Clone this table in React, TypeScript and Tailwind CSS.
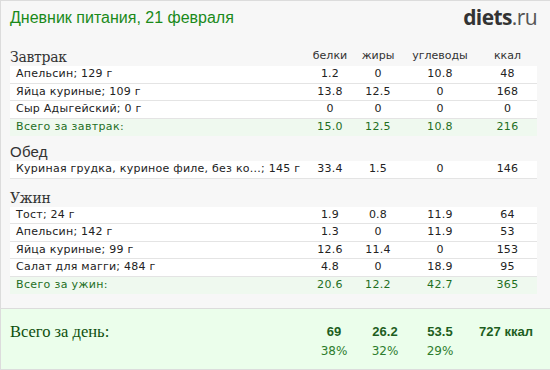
import React from "react";

type Row = { name: string; p: string; f: string; c: string; k: string };
type Section = { title: string; titleClass: string; gap: string; rows: Row[]; total?: Row };

const sections: Section[] = [
  {
    title: "Завтрак",
    titleClass: "font-['DejaVu_Serif',serif] text-[14px] tracking-[-0.3px]",
    gap: "mt-0",
    rows: [
      { name: "Апельсин; 129 г", p: "1.2", f: "0", c: "10.8", k: "48" },
      { name: "Яйца куриные; 109 г", p: "13.8", f: "12.5", c: "0", k: "168" },
      { name: "Сыр Адыгейский; 0 г", p: "0", f: "0", c: "0", k: "0" },
    ],
    total: { name: "Всего за завтрак:", p: "15.0", f: "12.5", c: "10.8", k: "216" },
  },
  {
    title: "Обед",
    titleClass: "font-['Liberation_Sans',sans-serif] text-[15px]",
    gap: "mt-[3px]",
    rows: [
      { name: "Куриная грудка, куриное филе, без ко...; 145 г", p: "33.4", f: "1.5", c: "0", k: "146" },
    ],
  },
  {
    title: "Ужин",
    titleClass: "font-['DejaVu_Serif',serif] text-[14px] tracking-[-0.3px]",
    gap: "mt-[6px]",
    rows: [
      { name: "Тост; 24 г", p: "1.9", f: "0.8", c: "11.9", k: "64" },
      { name: "Апельсин; 142 г", p: "1.3", f: "0", c: "11.9", k: "53" },
      { name: "Яйца куриные; 99 г", p: "12.6", f: "11.4", c: "0", k: "153" },
      { name: "Салат для магги; 484 г", p: "4.8", f: "0", c: "18.9", k: "95" },
    ],
    total: { name: "Всего за ужин:", p: "20.6", f: "12.2", c: "42.7", k: "365" },
  },
];

const Cells = ({ row }: { row: Row }) => (
  <>
    <span className="w-[48px] text-center">{row.p}</span>
    <span className="w-[48px] text-center">{row.f}</span>
    <span className="w-[76px] text-center">{row.c}</span>
    <span className="w-[59px] text-center">{row.k}</span>
  </>
);

export default function App() {
  return (
    <div className="w-[550px] h-[370px] overflow-hidden bg-[#f7f7f7] border-l border-t border-b border-[#dcdcdc] flex flex-col font-['DejaVu_Sans',sans-serif] text-[11px] tracking-[0.25px] text-[#222]">
      <div className="flex-1 pl-[9px] pr-[13px]">
        <header className="flex items-center justify-between h-[32px] pt-[1px]">
          <h1 className="font-['Liberation_Sans',sans-serif] text-[16px] tracking-normal text-[#1a8a1a]">
            Дневник питания, 21 февраля
          </h1>
          <div className="font-['Open_Sans',sans-serif] text-[21px] leading-none tracking-[-0.6px]">
            <span className="font-bold text-[#333]">diets</span>
            <span className="text-[#555]">.ru</span>
          </div>
        </header>

        {sections.map((s, i) => (
          <section key={s.title} className={i === 0 ? "mt-[11px]" : s.gap}>
            <div className="flex items-end h-[22px] pb-[2px]">
              <span className={`flex-1 leading-none text-[#333] ${s.titleClass}`}>{s.title}</span>
              {i === 0 ? (
                <div className="flex text-[#333] tracking-normal">
                  <span className="w-[48px] text-center">белки</span>
                  <span className="w-[48px] text-center">жиры</span>
                  <span className="w-[76px] text-center">углеводы</span>
                  <span className="w-[59px] text-center">ккал</span>
                </div>
              ) : null}
            </div>
            {s.rows.map((r) => (
              <div
                key={r.name}
                className="flex items-center h-[17.5px] bg-white border-b border-[#e4e4e4]"
              >
                <span className="flex-1 pl-[6px] whitespace-nowrap">{r.name}</span>
                <Cells row={r} />
              </div>
            ))}
            {s.total ? (
              <div className="flex items-center h-[17.5px] bg-[#eff9ef] text-[#1f6f1f] tracking-[0.35px]">
                <span className="flex-1 pl-[6px]">{s.total.name}</span>
                <Cells row={s.total} />
              </div>
            ) : null}
          </section>
        ))}
      </div>

      <footer className="h-[61px] border-t border-[#dcdcdc] bg-[#ebfeeb] pl-[9px] pr-[8px] flex tracking-normal">
        <div className="flex-1 pt-[11px] font-['Liberation_Serif',serif] text-[16.5px] text-[#0d4f0d]">
          Всего за день:
        </div>
        <div className="flex flex-col pt-[15px]">
          <div className="flex font-['Liberation_Sans',sans-serif] font-bold text-[13px] leading-[16px] text-[#1e5e1e]">
            <span className="w-[52px] text-center">69</span>
            <span className="w-[50px] text-center">26.2</span>
            <span className="w-[60px] text-center">53.5</span>
            <span className="w-[72px] text-center">727 ккал</span>
          </div>
          <div className="flex text-[12px] leading-[16px] mt-[3px] text-[#2e7d2e]">
            <span className="w-[52px] text-center">38%</span>
            <span className="w-[50px] text-center">32%</span>
            <span className="w-[60px] text-center">29%</span>
            <span className="w-[72px]" />
          </div>
        </div>
      </footer>
    </div>
  );
}
